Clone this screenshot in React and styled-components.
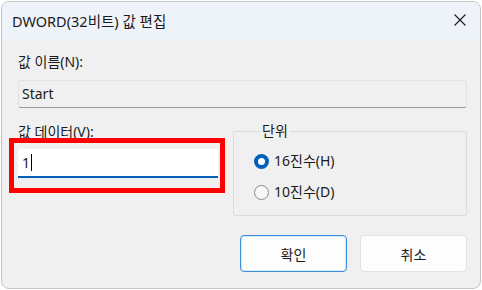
import styled, { createGlobalStyle } from 'styled-components'

const Global = createGlobalStyle`
  html, body {
    margin: 0;
    padding: 0;
    background: #ffffff;
  }
  body {
    font-family: "Noto Sans", "Noto Sans CJK KR", sans-serif;
    font-size: 14px;
    color: #1a1a1a;
  }
`

export default function App() {
  return (
    <>
      <Global />
      <Window>
        <TitleBar>
          <Title>DWORD(32비트) 값 편집</Title>
          <CloseButton aria-label="닫기">
            <svg width="12" height="12" viewBox="0 0 12 12">
              <path d="M0.5 0.5 L11.5 11.5 M11.5 0.5 L0.5 11.5" stroke="#1a1a1a" strokeWidth="1.1" />
            </svg>
          </CloseButton>
        </TitleBar>

        <Body>
          <Label>값 이름(N):</Label>
          <NameField>Start</NameField>

          <Middle>
            <DataColumn>
              <Label>값 데이터(V):</Label>
              <DataWrap>
                <DataInput>1<Caret /></DataInput>
                <Highlight />
              </DataWrap>
            </DataColumn>

            <Group>
              <Legend>단위</Legend>
              <RadioRow>
                <Radio checked />
                <span>16진수(H)</span>
              </RadioRow>
              <RadioRow>
                <Radio />
                <span>10진수(D)</span>
              </RadioRow>
            </Group>
          </Middle>

          <Buttons>
            <Button primary>확인</Button>
            <Button>취소</Button>
          </Buttons>
        </Body>
      </Window>
    </>
  )
}

const Window = styled.div`
  margin: 1px;
  width: 478px;
  height: 286px;
  border: 1px solid #c4c4c4;
  border-radius: 8px;
  overflow: hidden;
  background: #f0f0f0;
  display: flex;
  flex-direction: column;
`

const TitleBar = styled.div`
  height: 38px;
  background: #eef3f9;
  display: flex;
  align-items: center;
  justify-content: space-between;
  padding: 0 14px 0 10px;
`

const Title = styled.div`
  font-size: 14.5px;
  color: #1a1a1a;
  margin-top: -2px;
`

const CloseButton = styled.div`
  width: 12px;
  height: 12px;
  display: flex;
  margin-top: -2px;
`

const Body = styled.div`
  flex: 1;
  padding: 12px 13px 0 16px;
  display: flex;
  flex-direction: column;
`

const Label = styled.div`
  line-height: 20px;
  height: 20px;
`

const NameField = styled.div`
  margin-top: 8px;
  height: 28px;
  box-sizing: border-box;
  border: 1px solid #e2e2e2;
  border-bottom-color: #9a9a9a;
  border-radius: 3px;
  background: #f0f0f0;
  padding: 0 3px;
  line-height: 26px;
`

const Middle = styled.div`
  margin-top: 14px;
  display: grid;
  grid-template-columns: 200px 234px;
  justify-content: space-between;
  align-items: start;
`

const DataColumn = styled.div`
  display: flex;
  flex-direction: column;
`

const DataWrap = styled.div`
  position: relative;
  margin-top: 7px;
`

const DataInput = styled.div`
  height: 29px;
  box-sizing: border-box;
  background: #ffffff;
  border-bottom: 2px solid #005fb8;
  border-radius: 3px 3px 0 0;
  padding: 0 4px;
  line-height: 27px;
  display: flex;
  align-items: center;
`

const Caret = styled.span`
  display: inline-block;
  width: 1px;
  height: 17px;
  margin-left: 1px;
  background: #000000;
`

const Highlight = styled.div`
  position: absolute;
  top: -11px;
  left: -9px;
  right: -7px;
  bottom: -15px;
  border: 5px solid #ff0000;
  pointer-events: none;
`

const Group = styled.fieldset`
  margin: 0;
  padding: 11px 0 0 20px;
  height: 94px;
  box-sizing: border-box;
  border: 1px solid #dcdcdc;
  border-radius: 2px;
  display: flex;
  flex-direction: column;
  gap: 11px;
`

const Legend = styled.legend`
  padding: 0 2px;
  margin-left: 6px;
  line-height: 18px;
`

const RadioRow = styled.label`
  display: flex;
  align-items: center;
  gap: 5px;
  line-height: 20px;
`

const Radio = styled.span`
  width: 15px;
  height: 15px;
  box-sizing: border-box;
  border-radius: 50%;
  display: inline-flex;
  align-items: center;
  justify-content: center;
  border: ${p => (p.checked ? 'none' : '1px solid #8a8a8a')};
  background: ${p => (p.checked ? '#005fb8' : '#f7f7f7')};

  &::after {
    content: '';
    display: ${p => (p.checked ? 'block' : 'none')};
    width: 7px;
    height: 7px;
    border-radius: 50%;
    background: #ffffff;
  }
`

const Buttons = styled.div`
  margin-top: 19px;
  display: flex;
  justify-content: flex-end;
  gap: 13px;
`

const Button = styled.button`
  width: 107px;
  height: 37px;
  box-sizing: border-box;
  font-family: inherit;
  font-size: 14px;
  color: #1a1a1a;
  background: #fdfdfd;
  border: 1px solid ${p => (p.primary ? '#3b8ee0' : '#e3e3e3')};
  box-shadow: ${p => (p.primary ? 'inset 0 0 0 1px #d6e8fa' : 'none')};
  border-radius: 4px;
`
